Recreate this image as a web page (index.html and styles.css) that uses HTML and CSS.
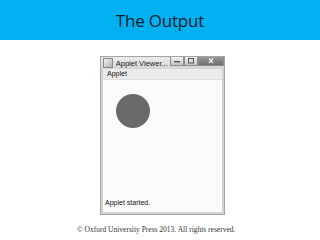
FILE: index.html
```html
<!DOCTYPE html>
<html lang="en">
<head>
	<meta charset="UTF-8" />
	<title>The Output</title>
	<link rel="stylesheet" href="styles.css">
</head>
<body>
	<div class="header">
		<h1>The Output</h1>
	</div>

	<div class="stage">
		<!-- applet viewer window screenshot -->
		<div class="win">
			<div class="titlebar">
				<span class="app-icon"></span>
				<span class="win-title">Applet Viewer...</span>
				<div class="win-btns">
					<span class="wbtn">
						<svg width="8" height="6" viewBox="0 0 8 6"><rect x="1" y="3" width="6" height="1.4" fill="#555"/></svg>
					</span>
					<span class="wbtn">
						<svg width="8" height="6" viewBox="0 0 8 6"><rect x="1.5" y="0.5" width="5" height="4.5" fill="none" stroke="#555" stroke-width="1"/></svg>
					</span>
					<span class="wbtn close">
						<svg width="8" height="6" viewBox="0 0 8 6"><path d="M2 0.5 L6 5 M6 0.5 L2 5" stroke="#eee" stroke-width="1.2"/></svg>
					</span>
				</div>
			</div>
			<div class="menubar">Applet</div>
			<div class="canvas">
				<div class="circle"></div>
			</div>
			<div class="status">Applet started.</div>
		</div>
	</div>

	<div class="footer">© Oxford University Press 2013. All rights reserved.</div>
</body>
</html>
```

FILE: styles.css
```css
body {
	margin: 0;
	width: 320px;
	height: 240px;
	background: #ffffff;
	overflow: hidden;
}

.header {
	height: 40px;
	background-color: #00b0f0;
	display: flex;
	align-items: center;
	justify-content: center;
}

.header h1 {
	margin: 0;
	font-family: "Open Sans", sans-serif;
	font-size: 17px;
	font-weight: 400;
	color: #141a2e;
	letter-spacing: -0.2px;
}

.stage {
	padding: 16px 0 0 100px;
}

.win {
	width: 119px;
	height: 155px;
	border: 1px solid #a4a4a4;
	background: #d2d2d2;
	padding: 0 2px 2px 2px;
	box-sizing: content-box;
	display: flex;
	flex-direction: column;
	font-family: "Liberation Sans", Arial, sans-serif;
}

.titlebar {
	height: 12px;
	display: flex;
	align-items: center;
	background: linear-gradient(#ececec, #d4d4d4);
	margin: 0 -2px;
	padding: 0 0 0 2px;
}

.app-icon {
	width: 8px;
	height: 8px;
	border: 1px solid #8a8a8a;
	background: linear-gradient(135deg, #f4f4f4, #b0b0b0);
	margin-right: 3px;
}

.win-title {
	font-size: 7.5px;
	color: #222;
	white-space: nowrap;
	overflow: hidden;
	width: 56px;
}

.win-btns {
	display: flex;
	margin-left: auto;
	align-self: flex-start;
}

.wbtn {
	width: 12px;
	height: 8px;
	border: 1px solid #8c8c8c;
	border-top: none;
	background: linear-gradient(#f2f2f2, #c4c4c4);
	display: flex;
	align-items: center;
	justify-content: center;
}

.wbtn.close {
	width: 24px;
	background: linear-gradient(#9a9a9a, #6e6e6e);
}

.menubar {
	height: 10px;
	background: #ececec;
	font-size: 7px;
	color: #111;
	line-height: 10px;
	padding-left: 4px;
	border-bottom: 1px solid #e0e0e0;
}

.canvas {
	flex: 1;
	background: #fbfbfb;
	padding: 14px 0 0 13px;
}

.circle {
	width: 34px;
	height: 34px;
	border-radius: 50%;
	background: #6a6a6a;
}

.status {
	background: #fbfbfb;
	font-size: 7px;
	line-height: 8px;
	color: #111;
	padding: 0 0 5px 2px;
}

.footer {
	margin-top: 10px;
	padding-left: 77px;
	font-family: "Liberation Serif", "Times New Roman", serif;
	font-size: 7.5px;
	color: #333;
}
```
